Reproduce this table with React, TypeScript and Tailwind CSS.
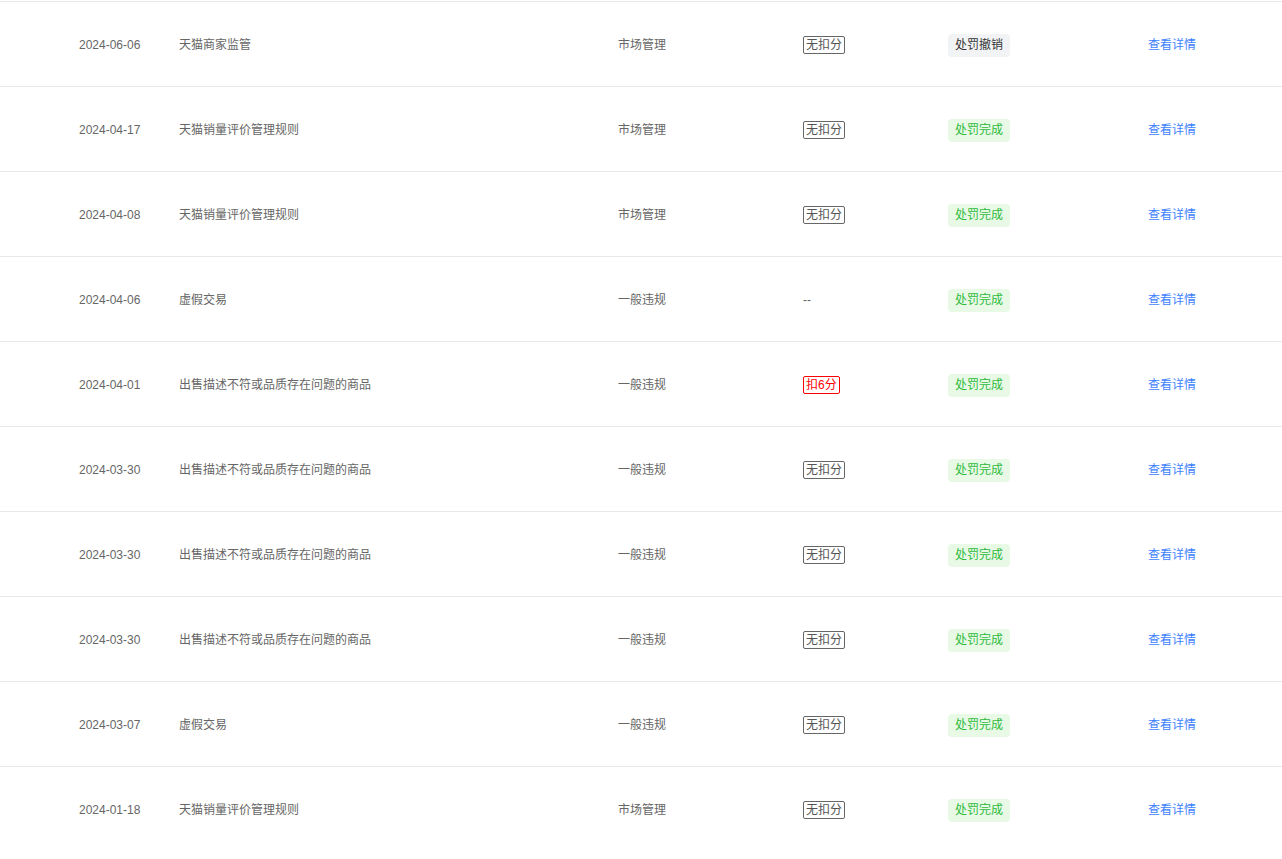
import React from "react";

type Row = {
  date: string;
  title: string;
  category: string;
  score: string | null;
  status: "done" | "revoked";
};

const rows: Row[] = [
  { date: "2024-06-06", title: "天猫商家监管", category: "市场管理", score: "无扣分", status: "revoked" },
  { date: "2024-04-17", title: "天猫销量评价管理规则", category: "市场管理", score: "无扣分", status: "done" },
  { date: "2024-04-08", title: "天猫销量评价管理规则", category: "市场管理", score: "无扣分", status: "done" },
  { date: "2024-04-06", title: "虚假交易", category: "一般违规", score: null, status: "done" },
  { date: "2024-04-01", title: "出售描述不符或品质存在问题的商品", category: "一般违规", score: "扣6分", status: "done" },
  { date: "2024-03-30", title: "出售描述不符或品质存在问题的商品", category: "一般违规", score: "无扣分", status: "done" },
  { date: "2024-03-30", title: "出售描述不符或品质存在问题的商品", category: "一般违规", score: "无扣分", status: "done" },
  { date: "2024-03-30", title: "出售描述不符或品质存在问题的商品", category: "一般违规", score: "无扣分", status: "done" },
  { date: "2024-03-07", title: "虚假交易", category: "一般违规", score: "无扣分", status: "done" },
  { date: "2024-01-18", title: "天猫销量评价管理规则", category: "市场管理", score: "无扣分", status: "done" },
];

function ScoreTag({ score }: { score: string | null }) {
  if (!score) return <span className="text-[#666]">--</span>;
  const penalty = score !== "无扣分";
  return (
    <span
      className={
        penalty
          ? "inline-block rounded-[2px] border border-[#ff0000] px-[2px] leading-[16px] text-[#ff0000]"
          : "inline-block rounded-[2px] border border-[#666] px-[2px] leading-[16px] text-[#555]"
      }
    >
      {score}
    </span>
  );
}

function StatusBadge({ status }: { status: Row["status"] }) {
  if (status === "revoked") {
    return (
      <span className="inline-block rounded-[4px] bg-[#f2f3f5] px-[7px] leading-[23px] text-[#333]">
        处罚撤销
      </span>
    );
  }
  return (
    <span className="inline-block rounded-[4px] bg-[#e8f9e6] px-[7px] leading-[23px] text-[#2dbb3c]">
      处罚完成
    </span>
  );
}

export default function App() {
  return (
    <div
      className="min-h-screen w-full bg-white pt-px text-[12px]"
      style={{ fontFamily: '"Liberation Sans", "Noto Sans CJK SC", sans-serif' }}
    >
      {rows.map((r, i) => (
        <div
          key={i}
          className="grid h-[85px] grid-cols-[100px_439px_185px_145px_200px_1fr] items-center border-t border-[#e8e8e8] pt-[2px] pl-[79px]"
        >
          <span className="text-[#666]">{r.date}</span>
          <span className="text-[#666]">{r.title}</span>
          <span className="text-[#666]">{r.category}</span>
          <div>
            <ScoreTag score={r.score} />
          </div>
          <div>
            <StatusBadge status={r.status} />
          </div>
          <a className="cursor-pointer text-[#3d7fff]">查看详情</a>
        </div>
      ))}
    </div>
  );
}
